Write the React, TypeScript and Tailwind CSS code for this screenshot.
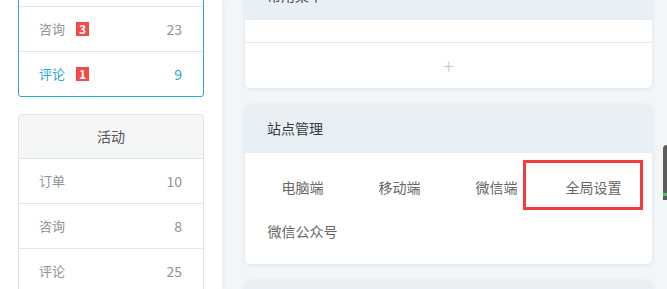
import React from "react";

const font = { fontFamily: '"Noto Sans CJK SC", "Noto Sans", sans-serif' };

function Row({ label, value, badge, active, last }: { label: string; value: string; badge?: string; active?: boolean; last?: boolean }) {
  return (
    <div className={`flex shrink-0 items-center justify-between pl-[20px] pr-[21px] text-[13px] ${last ? "h-[44px]" : "h-[45px] border-b border-[#e1e6ea]"} ${active ? "text-[#2aa6de]" : "text-[#8e9299]"}`}>
      <div className="flex items-center">
        <span>{label}</span>
        {badge && (
          <span className="ml-[11px] flex h-[14px] w-[13px] items-center justify-center bg-[#f44a4a] text-[12px] font-bold leading-none text-white">{badge}</span>
        )}
      </div>
      <span className="text-[14px]">{value}</span>
    </div>
  );
}

export default function App() {
  return (
    <div className="relative flex h-[289px] w-[667px] overflow-hidden bg-[#f3f6f9]" style={font}>
      {/* left panel */}
      <div className="relative z-10 flex h-full w-[222px] shrink-0 flex-col gap-[17px] bg-white pl-[18px] shadow-[2px_0_5px_rgba(0,0,0,0.04)]">
        <div className="mt-[-83px] w-[186px] shrink-0 overflow-hidden rounded-[3px] border border-[#2aa6de]">
          <div className="flex h-[44px] items-center justify-center bg-[#f5f6f8] text-[14px] text-[#555]">消息</div>
          <Row label="订单" value="5" />
          <Row label="咨询" value="23" badge="3" />
          <Row label="评论" value="9" badge="1" active last />
        </div>
        <div className="w-[186px] shrink-0 rounded-[3px] border border-[#dfe5e0]">
          <div className="flex h-[43px] items-center justify-center bg-[#f5f6f8] text-[14px] text-[#555]">活动</div>
          <div className="border-t border-[#dfe5e0]" />
          <Row label="订单" value="10" />
          <Row label="咨询" value="8" />
          <Row label="评论" value="25" />
        </div>
      </div>

      {/* right content */}
      <div className="flex flex-1 flex-col gap-[16px] pl-[23px]">
        <div className="mt-[-29px] w-[407px] shrink-0 overflow-hidden rounded-[5px] bg-white shadow-[0_1px_4px_rgba(120,140,170,0.18)]">
          <div className="flex h-[49px] items-center bg-[#e9f0f5] pl-[22px] text-[14px] text-[#444]">常用菜单</div>
          <div className="h-[23px] border-b border-[#e3e9ee]" />
          <div className="flex h-[45px] items-center justify-center text-[20px] font-light leading-none text-[#c8c8c8]">+</div>
        </div>

        <div className="w-[407px] shrink-0 overflow-hidden rounded-[5px] bg-white shadow-[0_1px_4px_rgba(120,140,170,0.18)]">
          <div className="flex h-[49px] items-center bg-[#e9f0f5] pl-[22px] text-[14px] text-[#3a3a3a]">站点管理</div>
          <div className="relative pb-[11px] pl-[9px] pt-[12px]">
            <div className="grid grid-cols-[repeat(4,97px)] text-[14px] text-[#666]">
              <div className="flex h-[44px] items-center justify-center">电脑端</div>
              <div className="flex h-[44px] items-center justify-center">移动端</div>
              <div className="flex h-[44px] items-center justify-center">微信端</div>
              <div className="flex h-[44px] items-center justify-center">全局设置</div>
              <div className="flex h-[44px] items-center justify-center">微信公众号</div>
            </div>
            <div className="pointer-events-none absolute left-[278px] top-[7px] h-[50px] w-[120px] border-[3px] border-[#f53b3b]" />
          </div>
        </div>

        <div className="w-[407px] shrink-0 overflow-hidden rounded-[5px] bg-white shadow-[0_1px_4px_rgba(120,140,170,0.18)]">
          <div className="h-[49px] bg-[#e9f0f5]" />
        </div>
      </div>

      {/* floating edge element */}
      <div className="absolute right-0 top-[145px] h-[55px] w-[4px] overflow-hidden rounded-tl-[4px] bg-[#5c5c5c]">
        <div className="absolute bottom-[4px] left-0 h-[3px] w-full bg-[#3ecf5a]" />
      </div>
    </div>
  );
}
